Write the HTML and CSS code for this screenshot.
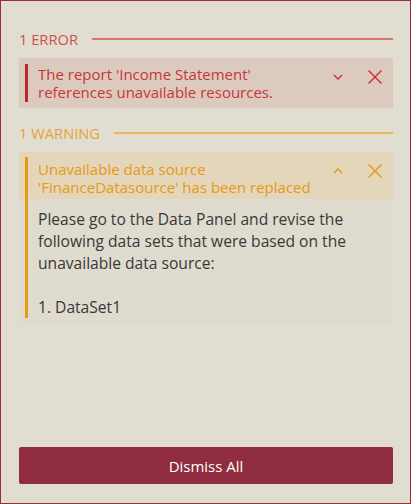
FILE: index.html
```html
<!DOCTYPE html>
<html lang="en">
<head>
    <meta charset="UTF-8">
    <meta name="viewport" content="width=device-width, initial-scale=1.0">
    <title>Report Issues</title>
    <link rel="stylesheet" href="styles.css">
</head>
<body>

    <div class="panel">

        <div class="section-title error">
            <span>1 ERROR</span>
            <span class="rule"></span>
        </div>

        <div class="notice error">
            <div class="notice-head">
                <div class="notice-text">The report 'Income Statement' references unavailable resources.</div>
                <div class="actions">
                    <button class="icon-btn" title="Expand">
                        <svg width="10" height="6" viewBox="0 0 10 6"><path d="M1 1l4 4 4-4" fill="none" stroke="currentColor" stroke-width="1.5"/></svg>
                    </button>
                    <button class="icon-btn" title="Close">
                        <svg width="14" height="14" viewBox="0 0 14 14"><path d="M0.5 0.5l13 13M13.5 0.5l-13 13" fill="none" stroke="currentColor" stroke-width="1.5"/></svg>
                    </button>
                </div>
            </div>
        </div>

        <div class="section-title warning">
            <span>1 WARNING</span>
            <span class="rule"></span>
        </div>

        <div class="notice warning">
            <div class="notice-head">
                <div class="notice-text">Unavailable data source 'FinanceDatasource' has been replaced</div>
                <div class="actions">
                    <button class="icon-btn" title="Collapse">
                        <svg width="10" height="6" viewBox="0 0 10 6"><path d="M1 5l4-4 4 4" fill="none" stroke="currentColor" stroke-width="1.5"/></svg>
                    </button>
                    <button class="icon-btn" title="Close">
                        <svg width="14" height="14" viewBox="0 0 14 14"><path d="M0.5 0.5l13 13M13.5 0.5l-13 13" fill="none" stroke="currentColor" stroke-width="1.5"/></svg>
                    </button>
                </div>
            </div>
            <div class="notice-body">
                <p>Please go to the Data Panel and revise the following data sets that were based on the unavailable data source:</p>
                <p class="gap">1. DataSet1</p>
            </div>
        </div>

        <button class="dismiss">Dismiss All</button>
    </div>

</body>
</html>
```

FILE: styles.css
```css
body {
    margin: 0;
    font-family: "Open Sans", Arial, sans-serif;
    font-size: 15px;
    background-color: #e1ddd0;
}
.panel {
    height: 504px;
    box-sizing: border-box;
    border: 1px solid #9b2c3e;
    padding: 28px 17px 19px 18px;
    display: flex;
    flex-direction: column;
}
.section-title {
    display: flex;
    align-items: center;
    gap: 14px;
    font-size: 14.7px;
    line-height: 20px;
    margin-bottom: 9px;
}
.section-title .rule {
    flex: 1;
    height: 1.5px;
}
.section-title.error {
    color: #cf4f4e;
}
.section-title.error .rule {
    background-color: #d97670;
}
.section-title.warning {
    color: #e9a135;
    margin-top: 15px;
}
.section-title.warning .rule {
    background-color: #e9b85e;
}
.notice-head {
    display: flex;
    align-items: flex-start;
    padding: 6px 5px 6px 6px;
}
.notice-text {
    flex: 1;
    border-left: 3px solid;
    padding: 2px 8px 1px 10px;
    line-height: 17.5px;
}
.notice.error .notice-head {
    background-color: #dccabf;
}
.notice.error .notice-text {
    color: #c7363b;
    border-color: #c0272d;
}
.notice.warning .notice-head {
    background-color: #e3d6bb;
    padding: 5px 5px 0 6px;
}
.notice.warning .notice-text {
    color: #e69a15;
    border-color: #e59a10;
    padding: 3px 8px 3px 10px;
    line-height: 18px;
}
.actions {
    display: flex;
    gap: 11px;
    margin-top: 1px;
}
.notice.warning .actions {
    margin-top: 2px;
}
.icon-btn {
    width: 26px;
    height: 24px;
    padding: 0;
    border: none;
    background: none;
    color: inherit;
    display: flex;
    align-items: center;
    justify-content: center;
}
.notice.error .icon-btn {
    color: #c9363b;
}
.notice.warning .icon-btn {
    color: #e69a15;
}
.notice-body {
    background-color: #dfdbce;
    padding: 0 6px 6px 6px;
}
.notice-body p {
    margin: 0;
    border-left: 3px solid #e59a10;
    padding: 9px 6px 0 10px;
    font-size: 15.6px;
    line-height: 22px;
    color: #383838;
}
.notice-body p.gap {
    padding-top: 22px;
}
.dismiss {
    margin-top: auto;
    height: 37px;
    border: none;
    border-radius: 2px;
    background-color: #8f2c3f;
    color: #ffffff;
    font-family: "Open Sans", Arial, sans-serif;
    font-size: 15px;
}
```
